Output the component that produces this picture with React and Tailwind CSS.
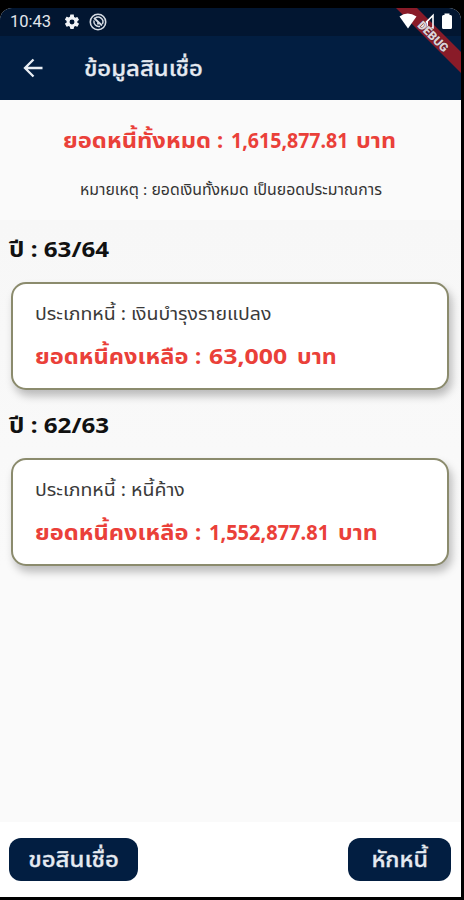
const debts = [
    { year: "63/64", type: "เงินบำรุงรายแปลง", amount: "63,000", width: "w-[88px]", stretch: "scale-x-[1.13]" },
    { year: "62/63", type: "หนี้ค้าง", amount: "1,552,877.81", width: "w-[129px]", stretch: "scale-x-[0.91]" },
];

// Widens or narrows a run of text from its left edge
function Stretch({ className, children }) {
    return <span className={`inline-block origin-left whitespace-nowrap ${className}`}>{children}</span>;
}

function StatusBar() {
    return (
        <div className="flex h-7 items-center bg-[#021631] pl-[10px] text-white">
            <span className="w-[41px] font-[Roboto] text-[16.5px] leading-7 text-[#e3e7ec]">10:43</span>
            <svg className="ml-[12px] size-[18px]" viewBox="0 0 24 24" fill="#f1f3f6">
                <path d="M19.14 12.94c.04-.3.06-.61.06-.94 0-.32-.02-.64-.07-.94l2.03-1.58a.49.49 0 0 0 .12-.61l-1.92-3.32a.49.49 0 0 0-.59-.22l-2.39.96a7 7 0 0 0-1.62-.94l-.36-2.54A.48.48 0 0 0 13.92 2h-3.84a.48.48 0 0 0-.47.41l-.36 2.54c-.59.24-1.13.57-1.62.94l-2.39-.96a.49.49 0 0 0-.59.22L2.74 8.47a.48.48 0 0 0 .12.61l2.03 1.58c-.05.3-.09.63-.09.94s.02.64.07.94l-2.03 1.58a.49.49 0 0 0-.12.61l1.92 3.32c.12.22.37.29.59.22l2.39-.96c.5.38 1.03.7 1.62.94l.36 2.54c.05.24.24.41.48.41h3.84c.24 0 .44-.17.47-.41l.36-2.54a7 7 0 0 0 1.62-.94l2.39.96c.22.08.47 0 .59-.22l1.92-3.32a.48.48 0 0 0-.12-.61zM12 15.3A3.3 3.3 0 1 1 12 8.7a3.3 3.3 0 0 1 0 6.6z" />
            </svg>
            <svg className="ml-[8px] size-[18px]" viewBox="0 0 18 18" fill="none" stroke="#d5dbe3">
                <circle cx="9" cy="9" r="7.7" strokeWidth="1.6" />
                <path d="M11 13.2A4.800 4.800 0 0 1 5 7.500M6 5.200A4.800 4.800 0 0 1 13.400 11" strokeWidth="1.5" />
                <path d="M5 5l8 7.500M9 11.500V9.500" strokeWidth="1.8" />
            </svg>
        </div>
    );
}

// Debug ribbon with the system icons in the same corner
function Corner() {
    return (
        <svg className="absolute right-0 top-0 h-[70px] w-[70px]" viewBox="0 0 70 70">
            <path d="M5 0h21L70 44v21z" fill="#891b28" />
            <path d="M8.500 8.500q8-6 17 0L17 20.500z" fill="#fff" />
            <path d="M42 7.500V20H29.500z" fill="none" stroke="#fff" strokeWidth="1.6" />
            <path d="M37 12.500V20h-7.500z" fill="#fff" />
            <path d="M53.500 5.500v1.500H52.500q-1.500 0-1.500 1.500v11q0 1.500 1.500 1.500h7q1.500 0 1.500-1.500v-11q0-1.500-1.500-1.500H58.500V5.500z" fill="#fff" />
            <text
                transform="translate(42 28.500) rotate(45)"
                textAnchor="middle"
                dominantBaseline="central"
                fill="#ddd3d8"
                stroke="#55222f"
                strokeWidth="0.8"
                paintOrder="stroke"
                fontFamily="Roboto, sans-serif"
                fontWeight="900"
                fontSize="12"
                textLength="38"
            >
                DEBUG
            </text>
        </svg>
    );
}

function DebtCard({ debt }) {
    return (
        <section>
            <h2 className="pl-[9px] text-[22px] font-bold leading-[30px] text-[#111]">
                <Stretch className="scale-x-[1.1]">ปี : {debt.year}</Stretch>
            </h2>
            <div className="ml-[11px] mr-3 mt-[19px] flex h-[108px] flex-col rounded-[15px] border-2 border-[#8b8b6d] bg-white pl-[22px] pt-[16px] shadow-[3px_6px_9px_#00000040]">
                <p className="text-[18px] leading-[26px] text-[#3a3a3a]">
                    <Stretch className="scale-x-[1.083]">ประเภทหนี้ : {debt.type}</Stretch>
                </p>
                <p className="mt-[15px] flex text-[22px] font-bold leading-[28px] text-[#ea4039]">
                    <Stretch className="w-[160px] scale-x-[1.075]">ยอดหนี้คงเหลือ</Stretch>
                    <Stretch className="w-[14px]">:</Stretch>
                    <Stretch className={`${debt.width} ${debt.stretch}`}>{debt.amount}</Stretch>
                    <Stretch className="scale-x-[1.05]">บาท</Stretch>
                </p>
            </div>
        </section>
    );
}

export default function App() {
    return (
        <div className="h-[900px] w-[464px] overflow-hidden bg-black pb-[3px] pr-[3px] pt-2 font-['Noto_Sans','Noto_Sans_Thai',sans-serif]">
            <div className="relative flex h-full flex-col overflow-hidden rounded-t-[12px] bg-[#fafafa]">
                <StatusBar />
                <header className="flex h-16 items-center bg-[#021e41] pl-[21px] text-white">
                    <svg className="size-6" viewBox="0 0 24 24" fill="none" stroke="#e9eef4" strokeWidth="2.3">
                        <path d="M21.500 12H4M12.500 3.500 4 12l8.500 8.500" />
                    </svg>
                    <h1 className="ml-[39px] pb-[2px] text-[22px] font-medium text-[#e5eaf1] [-webkit-text-stroke:0.3px]">
                        <Stretch className="scale-x-[1.085]">ข้อมูลสินเชื่อ</Stretch>
                    </h1>
                </header>

                <main className="flex-1">
                    <div className="h-[120px] pt-[25px]">
                        <p className="flex pl-[63px] text-[22px] font-bold leading-[28px] text-[#ea4039]">
                            <Stretch className="w-[154px] scale-x-[1.08]">ยอดหนี้ทั้งหมด</Stretch>
                            <Stretch className="w-[14px]">:</Stretch>
                            <Stretch className="w-[125px] scale-x-[0.89]">1,615,877.81</Stretch>
                            <Stretch className="scale-x-[1.06]">บาท</Stretch>
                        </p>
                        <p className="mt-[24px] whitespace-nowrap text-center text-[15px] leading-[24px] text-[#333]">
                            <span className="inline-block scale-x-[1.056]">หมายเหตุ : ยอดเงินทั้งหมด เป็นยอดประมาณการ</span>
                        </p>
                    </div>
                    <div className="flex flex-col gap-[19px] bg-gradient-to-b from-[#f7f7f7] to-[#fafafa] pt-[13px]">
                        {debts.map((debt) => (
                            <DebtCard key={debt.year} debt={debt} />
                        ))}
                    </div>
                </main>

                <footer className="flex h-[75px] items-start justify-between bg-white pl-[9px] pr-[10px] pt-4">
                    <button className="h-[43px] w-[129px] rounded-[12px] bg-[#021e41] pb-[2px] text-[22px] font-medium text-[#e5eaf1] [-webkit-text-stroke:0.3px]">
                        <span className="inline-block scale-x-[1.09] whitespace-nowrap">ขอสินเชื่อ</span>
                    </button>
                    <button className="h-[43px] w-[103px] rounded-[12px] bg-[#021e41] pb-[2px] text-[22px] font-medium text-[#e5eaf1] [-webkit-text-stroke:0.3px]">
                        <span className="inline-block scale-x-[1.06] whitespace-nowrap">หักหนี้</span>
                    </button>
                </footer>
                <Corner />
            </div>
        </div>
    );
}
